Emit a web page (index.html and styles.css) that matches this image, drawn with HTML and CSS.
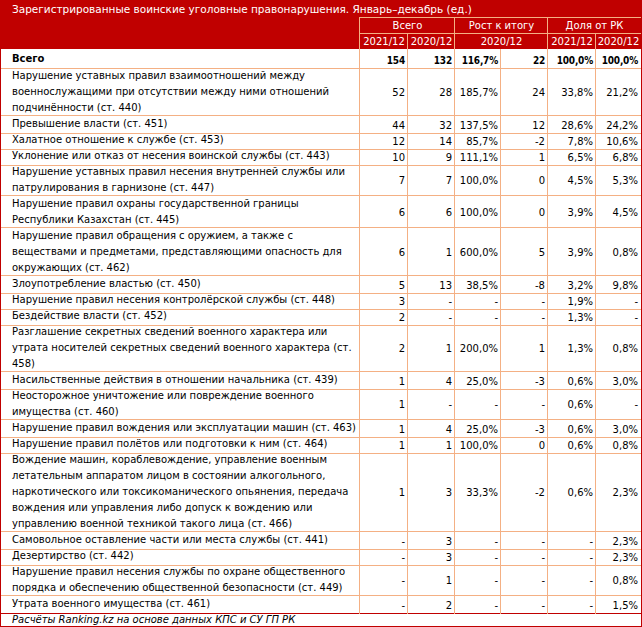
FILE: index.html
```html
<!DOCTYPE html>
<html lang="ru">
<head>
<meta charset="utf-8">
<title>Воинские уголовные правонарушения</title>
<link rel="stylesheet" href="styles.css">
</head>
<body>
<div class="sheet">
  <div class="title">Зарегистрированные воинские уголовные правонарушения. Январь–декабрь (ед.)</div>
  <div class="head">
    <div class="corner"></div>
    <div class="hc span2">Всего</div>
    <div class="hc span2">Рост к итогу</div>
    <div class="hc span2 last">Доля от РК</div>
    <div class="hc">2021/12</div>
    <div class="hc">2020/12</div>
    <div class="hc span2">2020/12</div>
    <div class="hc">2021/12</div>
    <div class="hc last">2020/12</div>
  </div>

  <div class="row total">
    <div class="lbl">Всего</div><div class="num">154</div><div class="num">132</div><div class="num">116,7%</div><div class="num">22</div><div class="num">100,0%</div><div class="num">100,0%</div>
  </div>
  <div class="row r3">
    <div class="lbl">Нарушение уставных правил взаимоотношений между<br>военнослужащими при отсутствии между ними отношений<br>подчинённости (ст. 440)</div><div class="num">52</div><div class="num">28</div><div class="num">185,7%</div><div class="num">24</div><div class="num">33,8%</div><div class="num">21,2%</div>
  </div>
  <div class="row">
    <div class="lbl">Превышение власти (ст. 451)</div><div class="num">44</div><div class="num">32</div><div class="num">137,5%</div><div class="num">12</div><div class="num">28,6%</div><div class="num">24,2%</div>
  </div>
  <div class="row">
    <div class="lbl">Халатное отношение к службе (ст. 453)</div><div class="num">12</div><div class="num">14</div><div class="num">85,7%</div><div class="num">-2</div><div class="num">7,8%</div><div class="num">10,6%</div>
  </div>
  <div class="row">
    <div class="lbl">Уклонение или отказ от несения воинской службы (ст. 443)</div><div class="num">10</div><div class="num">9</div><div class="num">111,1%</div><div class="num">1</div><div class="num">6,5%</div><div class="num">6,8%</div>
  </div>
  <div class="row r2">
    <div class="lbl">Нарушение уставных правил несения внутренней службы или<br>патрулирования в гарнизоне (ст. 447)</div><div class="num">7</div><div class="num">7</div><div class="num">100,0%</div><div class="num">0</div><div class="num">4,5%</div><div class="num">5,3%</div>
  </div>
  <div class="row r2">
    <div class="lbl">Нарушение правил охраны государственной границы<br>Республики Казахстан (ст. 445)</div><div class="num">6</div><div class="num">6</div><div class="num">100,0%</div><div class="num">0</div><div class="num">3,9%</div><div class="num">4,5%</div>
  </div>
  <div class="row r3">
    <div class="lbl">Нарушение правил обращения с оружием, а также с<br>веществами и предметами, представляющими опасность для<br>окружающих (ст. 462)</div><div class="num">6</div><div class="num">1</div><div class="num">600,0%</div><div class="num">5</div><div class="num">3,9%</div><div class="num">0,8%</div>
  </div>
  <div class="row">
    <div class="lbl">Злоупотребление властью (ст. 450)</div><div class="num">5</div><div class="num">13</div><div class="num">38,5%</div><div class="num">-8</div><div class="num">3,2%</div><div class="num">9,8%</div>
  </div>
  <div class="row">
    <div class="lbl">Нарушение правил несения контролёрской службы (ст. 448)</div><div class="num">3</div><div class="num">-</div><div class="num">-</div><div class="num">-</div><div class="num">1,9%</div><div class="num">-</div>
  </div>
  <div class="row">
    <div class="lbl">Бездействие власти (ст. 452)</div><div class="num">2</div><div class="num">-</div><div class="num">-</div><div class="num">-</div><div class="num">1,3%</div><div class="num">-</div>
  </div>
  <div class="row r3">
    <div class="lbl">Разглашение секретных сведений военного характера или<br>утрата носителей секретных сведений военного характера (ст.<br>458)</div><div class="num">2</div><div class="num">1</div><div class="num">200,0%</div><div class="num">1</div><div class="num">1,3%</div><div class="num">0,8%</div>
  </div>
  <div class="row">
    <div class="lbl">Насильственные действия в отношении начальника (ст. 439)</div><div class="num">1</div><div class="num">4</div><div class="num">25,0%</div><div class="num">-3</div><div class="num">0,6%</div><div class="num">3,0%</div>
  </div>
  <div class="row r2">
    <div class="lbl">Неосторожное уничтожение или повреждение военного<br>имущества (ст. 460)</div><div class="num">1</div><div class="num">-</div><div class="num">-</div><div class="num">-</div><div class="num">0,6%</div><div class="num">-</div>
  </div>
  <div class="row">
    <div class="lbl">Нарушение правил вождения или эксплуатации машин (ст. 463)</div><div class="num">1</div><div class="num">4</div><div class="num">25,0%</div><div class="num">-3</div><div class="num">0,6%</div><div class="num">3,0%</div>
  </div>
  <div class="row">
    <div class="lbl">Нарушение правил полётов или подготовки к ним (ст. 464)</div><div class="num">1</div><div class="num">1</div><div class="num">100,0%</div><div class="num">0</div><div class="num">0,6%</div><div class="num">0,8%</div>
  </div>
  <div class="row r5">
    <div class="lbl">Вождение машин, кораблевождение, управление военным<br>летательным аппаратом лицом в состоянии алкогольного,<br>наркотического или токсикоманического опьянения, передача<br>вождения или управления либо допуск к вождению или<br>управлению военной техникой такого лица (ст. 466)</div><div class="num">1</div><div class="num">3</div><div class="num">33,3%</div><div class="num">-2</div><div class="num">0,6%</div><div class="num">2,3%</div>
  </div>
  <div class="row">
    <div class="lbl">Самовольное оставление части или места службы (ст. 441)</div><div class="num">-</div><div class="num">3</div><div class="num">-</div><div class="num">-</div><div class="num">-</div><div class="num">2,3%</div>
  </div>
  <div class="row">
    <div class="lbl">Дезертирство (ст. 442)</div><div class="num">-</div><div class="num">3</div><div class="num">-</div><div class="num">-</div><div class="num">-</div><div class="num">2,3%</div>
  </div>
  <div class="row r2">
    <div class="lbl">Нарушение правил несения службы по охране общественного<br>порядка и обеспечению общественной безопасности (ст. 449)</div><div class="num">-</div><div class="num">1</div><div class="num">-</div><div class="num">-</div><div class="num">-</div><div class="num">0,8%</div>
  </div>
  <div class="row end">
    <div class="lbl">Утрата военного имущества (ст. 461)</div><div class="num">-</div><div class="num">2</div><div class="num">-</div><div class="num">-</div><div class="num">-</div><div class="num">1,5%</div>
  </div>
  <div class="note">Расчёты Ranking.kz на основе данных КПС и СУ ГП РК</div>
</div>
</body>
</html>
```
FILE: styles.css
```css
* {
  box-sizing: border-box;
}

body {
  margin: 0;
  background: #ffffff;
  font-family: "DejaVu Sans", Verdana, sans-serif;
  font-size: 10px;
  color: #000000;
}

.sheet {
  width: 642px;
  border: 1px solid #c00000;
  border-top: 0;
}

.title {
  height: 17px;
  background: #c00000;
  color: #ffffff;
  padding: 1px 0 0 11px;
  font-size: 10.5px;
  line-height: 16px;
  white-space: nowrap;
}

.head {
  display: grid;
  grid-template-columns: 359px 48px 47px 46px 47px 48px 45px;
  grid-template-rows: 16px 16px;
  background: #c00000;
  color: #ffffff;
}

.head .corner {
  grid-row: span 2;
  box-shadow: inset -1px 0 0 #f4b084;
}

.head .hc {
  box-shadow: inset -1px 1px 0 #f4b084;
  text-align: center;
  line-height: 16px;
  padding-top: 1px;
  white-space: nowrap;
}

.head .hc.last {
  box-shadow: inset 0 1px 0 #f4b084;
}

.head .span2 {
  grid-column: span 2;
}

.row {
  display: grid;
  grid-template-columns: 359px 48px 47px 46px 47px 48px 45px;
  height: 16px;
}

.row.total {
  height: 17px;
  font-weight: bold;
}

.row.total .num {
  font-family: "DejaVu Sans Condensed", "DejaVu Sans", sans-serif;
  font-stretch: condensed;
  letter-spacing: -0.2px;
}

.row.r2 {
  height: 32px;
}

.row.r3 {
  height: 48px;
}

.row.r5 {
  height: 80px;
}

.row > div {
  box-shadow: inset -1px -1px 0 #f4b084;
  line-height: 16px;
  white-space: nowrap;
}

.row > div:last-child {
  box-shadow: inset 0 -1px 0 #f4b084;
}

.row.end > div {
  box-shadow: inset -1px 0 0 #f4b084, inset 0 -1px 0 #c00000;
}

.row.end > div:last-child {
  box-shadow: inset 0 -1px 0 #c00000;
}

.lbl {
  padding: 2px 0 0 11px;
}

.num {
  display: flex;
  align-items: center;
  justify-content: flex-end;
  padding: 4px 3px 0 0;
}

.note {
  height: 16px;
  padding: 2px 0 0 11px;
  line-height: 16px;
  font-style: italic;
  white-space: nowrap;
}
```
